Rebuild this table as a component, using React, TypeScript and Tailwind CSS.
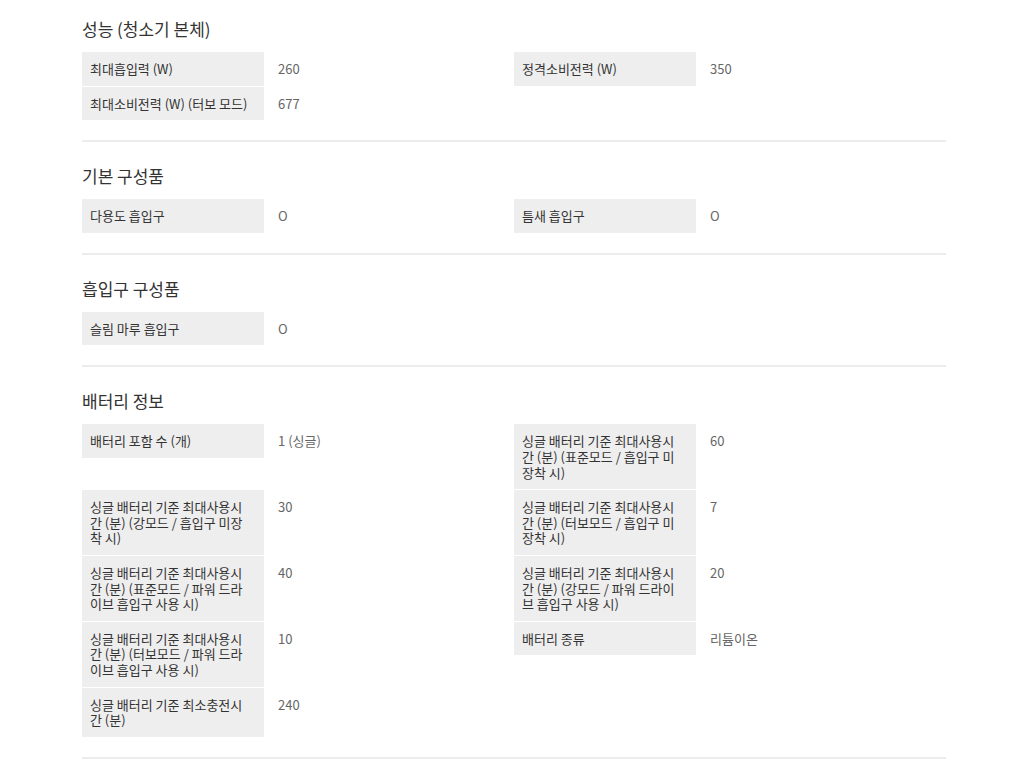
type Spec = { label: string; value: string };

const sections: { title: string; items: Spec[] }[] = [
  {
    title: '성능 (청소기 본체)',
    items: [
      { label: '최대흡입력 (W)', value: '260' },
      { label: '정격소비전력 (W)', value: '350' },
      { label: '최대소비전력 (W) (터보 모드)', value: '677' },
    ],
  },
  {
    title: '기본 구성품',
    items: [
      { label: '다용도 흡입구', value: 'O' },
      { label: '틈새 흡입구', value: 'O' },
    ],
  },
  {
    title: '흡입구 구성품',
    items: [{ label: '슬림 마루 흡입구', value: 'O' }],
  },
  {
    title: '배터리 정보',
    items: [
      { label: '배터리 포함 수 (개)', value: '1 (싱글)' },
      { label: '싱글 배터리 기준 최대사용시간 (분) (표준모드 / 흡입구 미장착 시)', value: '60' },
      { label: '싱글 배터리 기준 최대사용시간 (분) (강모드 / 흡입구 미장착 시)', value: '30' },
      { label: '싱글 배터리 기준 최대사용시간 (분) (터보모드 / 흡입구 미장착 시)', value: '7' },
      { label: '싱글 배터리 기준 최대사용시간 (분) (표준모드 / 파워 드라이브 흡입구 사용 시)', value: '40' },
      { label: '싱글 배터리 기준 최대사용시간 (분) (강모드 / 파워 드라이브 흡입구 사용 시)', value: '20' },
      { label: '싱글 배터리 기준 최대사용시간 (분) (터보모드 / 파워 드라이브 흡입구 사용 시)', value: '10' },
      { label: '배터리 종류', value: '리튬이온' },
      { label: '싱글 배터리 기준 최소충전시간 (분)', value: '240' },
    ],
  },
];

const SpecRow = ({ label, value }: Spec) => (
  <div className="flex items-start">
    <div className="w-[182px] shrink-0 bg-[#eeeeee] py-[9px] pl-2 pr-4 text-[13px] leading-[1.2] text-[#333] break-all">
      {label}
    </div>
    <div className="pl-[14px] py-[9px] text-[13px] leading-[1.2] text-[#666]">{value}</div>
  </div>
);

export default function App() {
  return (
    <div
      className="min-h-[767px] bg-white"
      style={{ fontFamily: '"Noto Sans CJK KR", "Noto Sans", sans-serif' }}
    >
      <div className="ml-[82px] w-[864px] pt-[17px]">
        {sections.map((s, i) => (
          <section
            key={s.title}
            className={`border-b-2 border-[#ececec] pb-[20px] ${i > 0 ? 'pt-[22px]' : ''}`}
          >
            <h2 className="text-[17px] leading-6 text-[#333]">{s.title}</h2>
            <div className="mt-[11px] grid grid-cols-2 gap-y-px">
              {s.items.map((it) => (
                <SpecRow key={it.label} {...it} />
              ))}
            </div>
          </section>
        ))}
      </div>
    </div>
  );
}
